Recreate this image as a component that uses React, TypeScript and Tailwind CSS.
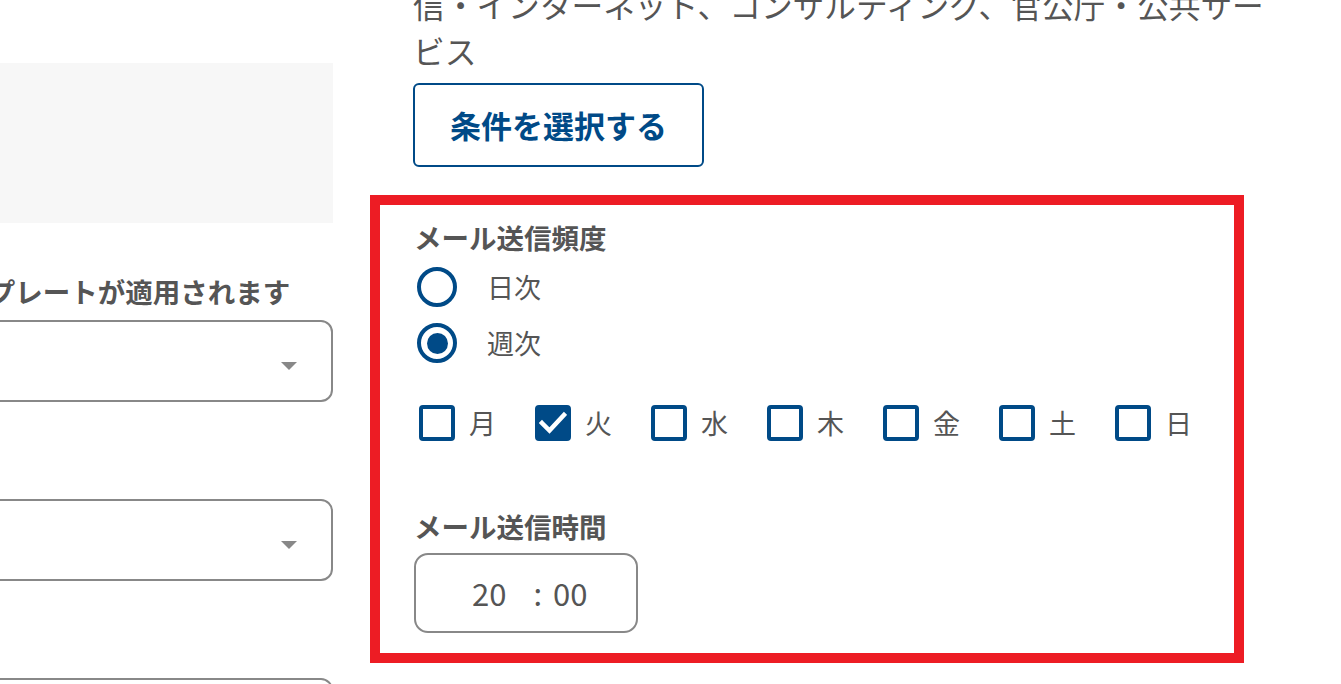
import React, { useState } from "react";

type Day = { id: string; label: string };

const days: Day[] = [
  { id: "mon", label: "月" },
  { id: "tue", label: "火" },
  { id: "wed", label: "水" },
  { id: "thu", label: "木" },
  { id: "fri", label: "金" },
  { id: "sat", label: "土" },
  { id: "sun", label: "日" },
];

function SelectBox() {
  return (
    <div className="h-[82px] w-full rounded-[12px] border-2 border-[#888] bg-white flex items-center justify-end pr-[34px]">
      <span className="mt-[10px] w-0 h-0 border-l-[8px] border-r-[8px] border-t-[8px] border-l-transparent border-r-transparent border-t-[#888]" />
    </div>
  );
}

function Radio({ checked, label, onClick }: { checked: boolean; label: string; onClick: () => void }) {
  return (
    <button type="button" onClick={onClick} className="h-[56px] flex items-center ml-[3px] text-left">
      <span className="w-[40px] h-[40px] rounded-full border-[4.5px] border-[#004a87] flex items-center justify-center">
        {checked && <span className="w-[21px] h-[21px] rounded-full bg-[#004a87]" />}
      </span>
      <span className="ml-[30px] text-[27px] leading-[40px] text-[#555]">{label}</span>
    </button>
  );
}

function Checkbox({ checked, label, onClick }: { checked: boolean; label: string; onClick: () => void }) {
  return (
    <button type="button" onClick={onClick} className="w-[116px] flex items-center text-left">
      <span
        className={`w-[36px] h-[36px] rounded-[4px] border-[4px] border-[#004a87] flex items-center justify-center ${
          checked ? "bg-[#004a87]" : "bg-white"
        }`}
      >
        {checked && (
          <svg viewBox="0 0 28 28" className="w-[28px] h-[28px]">
            <polyline points="3,14 10.5,21.5 25,6" fill="none" stroke="#fff" strokeWidth="4.5" strokeLinecap="square" />
          </svg>
        )}
      </span>
      <span className="ml-[14px] text-[27px] leading-[40px] text-[#555]">{label}</span>
    </button>
  );
}

export default function App() {
  const [freq, setFreq] = useState<"daily" | "weekly">("weekly");
  const [checked, setChecked] = useState<string[]>(["tue"]);

  const toggle = (id: string) =>
    setChecked((prev) => (prev.includes(id) ? prev.filter((d) => d !== id) : [...prev, id]));

  return (
    <div className="w-[1341px] h-[684px] overflow-hidden bg-white font-['Noto_Sans_CJK_JP','Noto_Sans',sans-serif] text-[#555]">
      <div className="flex items-start -mt-[65px]">
        {/* 左カラム */}
        <div className="w-[592px] -ml-[259px] shrink-0 pt-[128px]">
          <div className="h-[160px] bg-[#f7f7f7]" />

          <p className="mt-[48px] text-[27.5px] leading-[40px] font-bold whitespace-nowrap">
            選択したメールテンプレートが適用されます
          </p>
          <div className="mt-[9px]">
            <SelectBox />
          </div>

          <p className="mt-[48px] text-[27.5px] leading-[40px] font-bold">件名</p>
          <div className="mt-[9px]">
            <SelectBox />
          </div>

          <p className="mt-[48px] text-[27.5px] leading-[40px] font-bold">差出人</p>
          <div className="mt-[9px]">
            <SelectBox />
          </div>
        </div>

        {/* 右カラム */}
        <div className="w-[870px] ml-[80px] shrink-0">
          <p className="text-[31.7px] leading-[46px]">
            製造、建設、金融・保険、運輸・物流、小売・卸売、情報通信・インターネット、コンサルティング、官公庁・公共サービス
          </p>

          <button
            type="button"
            className="mt-[10px] w-[291px] h-[84px] rounded-[6px] border-2 border-[#004a87] bg-white text-[31px] font-bold text-[#004a87]"
          >
            条件を選択する
          </button>

          {/* メール配信設定 */}
          <div className="mt-[28px] -ml-[43px] w-[874px] border-[10px] border-[#ed1c24] pl-[34px] pt-[12px] pb-[20px]">
            <p className="text-[27.5px] leading-[40px] font-bold">メール送信頻度</p>
            <div className="mt-[2px] flex flex-col items-start">
              <Radio checked={freq === "daily"} label="日次" onClick={() => setFreq("daily")} />
              <Radio checked={freq === "weekly"} label="週次" onClick={() => setFreq("weekly")} />
            </div>

            <div className="mt-[24px] h-[56px] flex items-center ml-[5px]">
              {days.map((d) => (
                <Checkbox key={d.id} label={d.label} checked={checked.includes(d.id)} onClick={() => toggle(d.id)} />
              ))}
            </div>

            <p className="mt-[55px] text-[27.5px] leading-[40px] font-bold">メール送信時間</p>
            <div className="mt-[7px] w-[224px] h-[80px] rounded-[14px] border-2 border-[#888] flex items-center pl-[56px] text-[31px]">
              <span>20</span>
              <span className="ml-[27px]">:</span>
              <span className="ml-[11px]">00</span>
            </div>
          </div>
        </div>
      </div>
    </div>
  );
}
